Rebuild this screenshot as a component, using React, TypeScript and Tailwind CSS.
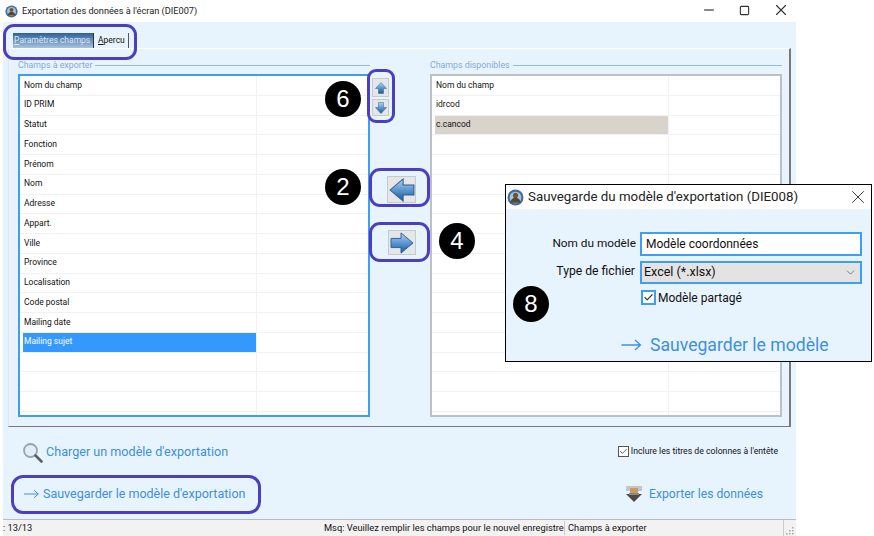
import React from 'react'
import { Minus, Square, X, ChevronDown, Check } from 'lucide-react'

type Dir = 'up' | 'down' | 'left' | 'right'

const leftFields = [
  'Nom du champ', 'ID PRIM', 'Statut', 'Fonction', 'Prénom', 'Nom', 'Adresse', 'Appart.',
  'Ville', 'Province', 'Localisation', 'Code postal', 'Mailing date', 'Mailing sujet',
  '', '', '', '',
]
const rightFields = ['Nom du champ', 'idrcod', 'c.cancod', ...Array(15).fill('')]

const arrowPaths: Record<Dir, string> = {
  up: 'M12 1 23 13h-6v10H7V13H1z',
  down: 'M12 23 1 11h6V1h10v10h6z',
  left: 'M1 12 13 1v6h10v10H13v6z',
  right: 'M23 12 11 23v-6H1V7h10V1z',
}

function AppIcon({ size }: { size: number }) {
  return (
    <svg width={size} height={size} viewBox="0 0 16 16" className="shrink-0">
      <circle cx="8" cy="8" r="7.5" fill="#3f6d9c" />
      <circle cx="8" cy="8" r="5.5" fill="#a9c3dc" />
      <circle cx="8" cy="6" r="2.4" fill="#6b5335" />
      <path d="M3.5 13c0-3.5 2-4.8 4.5-4.8s4.5 1.3 4.5 4.8z" fill="#5a4630" />
    </svg>
  )
}

function ArrowIcon({ dir, w, h }: { dir: Dir; w: number; h: number }) {
  return (
    <svg width={w} height={h} viewBox="0 0 24 24" preserveAspectRatio="none">
      <defs>
        <linearGradient id={`arrow-${dir}`} x1="0" y1="0" x2="0" y2="1">
          <stop offset="0" stopColor="#b4d2ee" />
          <stop offset="0.5" stopColor="#5b97d0" />
          <stop offset="1" stopColor="#1f5690" />
        </linearGradient>
      </defs>
      <path d={arrowPaths[dir]} fill={`url(#arrow-${dir})`} stroke="#2d5f94" strokeWidth="1" />
    </svg>
  )
}

function MoveButton({ className, dir, w, h }: { className: string; dir: Dir; w: number; h: number }) {
  return (
    <div className={`flex items-center justify-center bg-[#e4e6e8] border border-[#c6cacd] ${className}`}>
      <ArrowIcon dir={dir} w={w} h={h} />
    </div>
  )
}

function LinkArrow({ width }: { width: number }) {
  return (
    <svg width={width} height="12" viewBox="0 0 20 12" fill="none" stroke="#3d8fe0" strokeWidth="1.3" className="shrink-0">
      <path d="M0 6h19M13.5 1 19 6l-5.5 5" />
    </svg>
  )
}

function FieldGroup({ title, fields, accent }: { title: string; fields: string[]; accent: string }) {
  return (
    <div className="w-[352px] shrink-0 flex flex-col">
      <div className="h-[13px] flex items-center gap-[3px] mb-[2px]">
        <span className="text-[8.8px] leading-none text-[#84a9d6] whitespace-nowrap">{title}</span>
        <div className="flex-1 h-px bg-[#8fbdea]" />
      </div>
      <div className={`h-[343px] bg-white border-2 overflow-hidden ${accent}`}>
        {fields.map((field, i) => {
          const selected = field === 'Mailing sujet'
          const picked = field === 'c.cancod'
          return (
            <div key={i} className="h-[19.75px] flex border-b border-[#f1f1f1] pl-[3px]">
              <div
                className={`w-[234px] shrink-0 flex items-center pl-[1px] pb-[1px] text-[8.5px] whitespace-nowrap border-r border-[#f1f1f1] ${
                  selected ? 'bg-[#3399ff] text-white' : picked ? 'bg-[#d8d4cc] text-[#111]' : 'text-[#111]'
                }`}
              >
                {field}
              </div>
            </div>
          )
        })}
      </div>
    </div>
  )
}

export default function App() {
  return (
    <div className="relative w-[874px] h-[536px] bg-white overflow-hidden flex flex-col font-['Roboto',sans-serif] text-[#111]">
      {/* Title bar */}
      <div className="h-[22px] shrink-0 flex items-center pl-[5px] w-[796px]">
        <AppIcon size={13} />
        <span className="ml-[4px] text-[9.2px] text-[#222] whitespace-nowrap">Exportation des données à l'écran (DIE007)</span>
        <div className="ml-auto flex items-center text-[#333] pb-[2px]">
          <Minus size={14} strokeWidth={3.5} className="mr-[23px]" color="#888" />
          <Square size={11} strokeWidth={2.4} className="mr-[22px]" />
          <X size={18} strokeWidth={1.5} className="mr-[6px]" />
        </div>
      </div>

      {/* Window body */}
      <div className="ml-[3px] w-[793px] flex-1 flex flex-col bg-[#e8f4fd] min-h-0">
        <div className="h-[26px] shrink-0 flex items-end pl-[10px]">
          <div className="h-[15px] w-[81px] flex items-center pl-[1px] text-[8.5px] text-[#dbe8f5] bg-gradient-to-b from-[#2f5f9c] to-[#a9c4de] whitespace-nowrap border-r border-[#333]">
            <span className="underline">P</span>aramètres champs
          </div>
          <div className="h-[15px] w-[33px] ml-[2px] flex items-center pl-[2px] text-[8.5px] border-r border-[#555] whitespace-nowrap">
            <span className="underline">A</span>percu
          </div>
        </div>

        {/* Tab page */}
        <div className="ml-[5px] w-[783px] h-[379px] shrink-0 flex pl-[9px] pt-[10px] border-t border-t-white border-r-2 border-r-[#77797c] border-b border-b-[#77797c] border-l border-l-[#dfe6ec]">
          <FieldGroup title="Champs à exporter" fields={leftFields} accent="border-[#3f9df2]" />
          <div className="w-[60px] shrink-0 flex flex-col">
            <MoveButton className="ml-[2px] mt-[19px] w-[17px] h-[19px]" dir="up" w={12} h={12} />
            <MoveButton className="ml-[2px] mt-[2px] w-[17px] h-[17px]" dir="down" w={12} h={12} />
            <MoveButton className="ml-[17px] mt-[60px] w-[29px] h-[27px]" dir="left" w={26} h={24} />
            <MoveButton className="ml-[18px] mt-[27px] w-[28px] h-[25px]" dir="right" w={24} h={22} />
          </div>
          <FieldGroup title="Champs disponibles" fields={rightFields} accent="border-[#bcc1c4]" />
        </div>

        {/* Bottom actions */}
        <div className="flex-1 flex justify-between pl-[19px] pr-[18px] min-h-0">
          <div className="flex flex-col">
            <div className="mt-[13px] h-[24px] flex items-center">
              <svg width="21" height="21" viewBox="0 0 21 21" className="shrink-0">
                <circle cx="8.5" cy="8.5" r="6.5" fill="#e3edf5" stroke="#9aa4ad" strokeWidth="1.8" />
                <path d="M13.5 13.5 19.5 19.5" stroke="#5c5f62" strokeWidth="2.6" strokeLinecap="round" />
              </svg>
              <span className="ml-[3px] text-[12.6px] text-[#3d8fe0] whitespace-nowrap">Charger un modèle d'exportation</span>
            </div>
            <div className="mt-[18px] h-[24px] flex items-center pl-[2px]">
              <LinkArrow width={15} />
              <span className="ml-[4px] text-[12.5px] text-[#3d8fe0] whitespace-nowrap">Sauvegarder le modèle d'exportation</span>
            </div>
          </div>
          <div className="flex flex-col items-end">
            <div className="mt-[18px] h-[13px] flex items-center">
              <div className="w-[11px] h-[11px] bg-white border border-[#555] flex items-center justify-center">
                <Check size={9} strokeWidth={2} color="#333" />
              </div>
              <span className="ml-[2px] text-[8.7px] whitespace-nowrap">Inclure les titres de colonnes à l'entête</span>
            </div>
            <div className="mt-[24px] h-[24px] flex items-center mr-[15px]">
              <svg width="18" height="18" viewBox="0 0 18 18" className="shrink-0">
                <rect x="1" y="1" width="16" height="5" fill="#c3c6c9" />
                <rect x="5" y="3" width="8" height="6" fill="#c99a5c" />
                <path d="M1 9h16l-8 8z" fill="#4a4a48" />
                <rect x="4" y="8" width="10" height="2" fill="#8a8a86" />
              </svg>
              <span className="ml-[6px] text-[12.2px] text-[#3d8fe0] whitespace-nowrap">Exporter les données</span>
            </div>
          </div>
        </div>

        {/* Status bar */}
        <div className="h-[17px] shrink-0 flex items-center bg-[#f2f2f2] border-t border-[#b9bcbf] text-[9.3px] overflow-hidden">
          <div className="w-[320px] shrink-0 whitespace-nowrap">: 13/13</div>
          <div className="w-[241px] shrink-0 pl-[1px] overflow-hidden whitespace-nowrap">
            Msq: Veuillez remplir les champs pour le nouvel enregistre
          </div>
          <div className="w-[219px] shrink-0 pl-[3px] border-l border-[#ccc] whitespace-nowrap">Champs à exporter</div>
          <div className="flex-1 h-full flex items-end justify-end border-l border-[#ccc] pr-[2px] pb-[1px]">
            <svg width="8" height="8" viewBox="0 0 8 8" fill="#aaa">
              <rect x="6" y="0" width="1.5" height="1.5" />
              <rect x="3" y="3" width="1.5" height="1.5" />
              <rect x="6" y="3" width="1.5" height="1.5" />
              <rect x="0" y="6" width="1.5" height="1.5" />
              <rect x="3" y="6" width="1.5" height="1.5" />
              <rect x="6" y="6" width="1.5" height="1.5" />
            </svg>
          </div>
        </div>
      </div>

      {/* Annotation outlines */}
      <div className="absolute left-[3px] top-[24px] w-[134px] h-[36px] border-[3px] border-[#4b3fc0] rounded-[11px]" />
      <div className="absolute left-[367px] top-[69px] w-[28px] h-[54px] border-[3px] border-[#4b3fc0] rounded-[9px]" />
      <div className="absolute left-[369px] top-[168px] w-[61px] h-[39px] border-[3px] border-[#4b3fc0] rounded-[11px]" />
      <div className="absolute left-[369px] top-[222px] w-[61px] h-[40px] border-[3px] border-[#4b3fc0] rounded-[11px]" />
      <div className="absolute left-[11px] top-[475px] w-[250px] h-[39px] border-[3px] border-[#4b3fc0] rounded-[12px]" />

      {/* Step numbers */}
      {[
        { n: 6, pos: 'left-[325px] top-[81px]' },
        { n: 2, pos: 'left-[325px] top-[169px]' },
        { n: 4, pos: 'left-[439px] top-[223px]' },
        { n: 8, pos: 'left-[513px] top-[286px]' },
      ].map(({ n, pos }) => (
        <div
          key={n}
          className={`absolute z-10 w-[36px] h-[36px] rounded-full bg-black text-white flex items-center justify-center text-[24px] font-['Liberation_Sans',sans-serif] ${pos}`}
        >
          {n}
        </div>
      ))}

      {/* Save dialog */}
      <div className="absolute left-[505px] top-[184px] w-[367px] h-[178px] border border-black bg-[#e8f4fd] flex flex-col">
        <div className="h-[24px] shrink-0 bg-white flex items-center pl-[1px]">
          <AppIcon size={17} />
          <span className="ml-[4px] text-[13.3px] text-[#222] whitespace-nowrap">Sauvegarde du modèle d'exportation (DIE008)</span>
          <X size={22} strokeWidth={1} className="ml-auto mr-[2px] text-[#333]" />
        </div>
        <div className="flex flex-col flex-1">
          <div className="mt-[23px] flex items-center h-[24px]">
            <span className="w-[130px] text-right text-[11.8px] whitespace-nowrap">Nom du modèle</span>
            <div className="ml-[4px] w-[222px] h-[24px] bg-white border-2 border-[#3f9df2] flex items-center pl-[4px] text-[12px]">
              Modèle coordonnées
            </div>
          </div>
          <div className="mt-[5px] flex items-center h-[23px]">
            <span className="w-[129px] text-right text-[12.2px] leading-none pb-[2px] whitespace-nowrap">Type de fichier</span>
            <div className="ml-[5px] w-[222px] h-[23px] bg-[#e3e3e3] border-2 border-[#3f9df2] flex items-center pl-[2px] text-[12.5px]">
              Excel (*.xlsx)
              <ChevronDown size={13} strokeWidth={1.3} className="ml-auto mr-[3px] text-[#555]" />
            </div>
          </div>
          <div className="mt-[6px] ml-[135px] flex items-center h-[15px]">
            <div className="w-[15px] h-[15px] bg-white border-2 border-[#3f9df2] flex items-center justify-center">
              <Check size={13} strokeWidth={2.4} color="#333" />
            </div>
            <span className="ml-[2px] text-[12px] whitespace-nowrap">Modèle partagé</span>
          </div>
          <div className="mt-[27px] ml-[115px] flex items-center">
            <LinkArrow width={21} />
            <span className="ml-[8px] text-[17.6px] text-[#3d8fe0] whitespace-nowrap">Sauvegarder le modèle</span>
          </div>
        </div>
      </div>
    </div>
  )
}
